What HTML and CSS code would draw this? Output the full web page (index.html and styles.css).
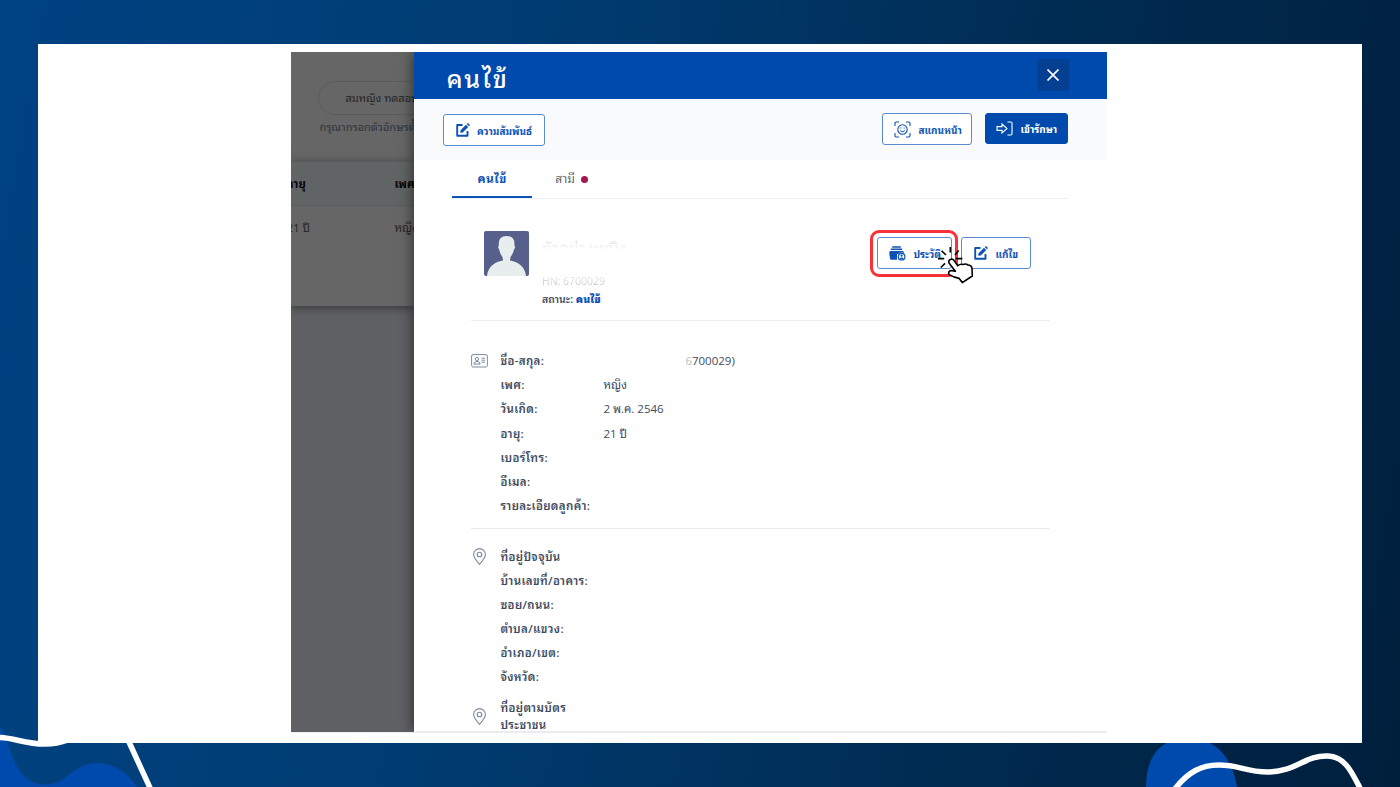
FILE: index.html
```html
<!DOCTYPE html>
<html lang="th">
<head>
    <meta charset="UTF-8">
    <meta name="viewport" content="width=device-width, initial-scale=1.0">
    <title>คนไข้</title>
    <link rel="stylesheet" href="styles.css">
</head>
<body>
    <div class="slide">
        <svg class="waves" viewBox="0 0 1400 787">
            <path class="blob" d="M0 727C9 738 10 760 22 774C33 787 52 788 66 777C80 766 88 763 98 763C114 763 128 773 137 787H0Z"/>
            <path class="blob" d="M1146 787C1146 762 1156 738 1188 738C1218 738 1233 761 1237 787Z"/>
        </svg>
        <div class="card">
            <div class="shot">
                <div class="behind">
                    <div class="search">
                        <div class="search-box">สมหญิง ทดสอบ</div>
                        <div class="hint">กรุณากรอกตัวอักษรตั้ง</div>
                    </div>
                    <div class="table">
                        <div class="table-row table-head"><span>อายุ</span><span>เพศ</span></div>
                        <div class="table-row"><span>21 ปี</span><span>หญิง</span></div>
                    </div>
                </div>
                <div class="drawer">
                    <div class="drawer-header">
                        <h1>คนไข้</h1>
                        <button class="close">
                            <svg width="12" height="12" viewBox="0 0 12 12"><path d="M.5 .5L11.5 11.5M11.5 .5L.5 11.5" stroke="#fff" stroke-width="1.7"/></svg>
                        </button>
                    </div>
                    <div class="toolbar">
                        <button class="btn btn-relation">
                            <svg width="14" height="14" viewBox="0 0 14 14"><use href="#edit"/></svg>
                            <span>ความสัมพันธ์</span>
                        </button>
                        <button class="btn btn-scan">
                            <svg width="17" height="17" viewBox="0 0 17 17" fill="none" stroke="#0d52b5" stroke-width="1.1">
                                <path d="M1 5V2.2Q1 1 2.2 1H5M12 1H14.8Q16 1 16 2.2V5M16 12V14.8Q16 16 14.8 16H12M5 16H2.2Q1 16 1 14.8V12"/>
                                <circle cx="8.5" cy="8.5" r="4.7"/>
                                <path d="M6.8 6.5V7.6M10.2 6.5V7.6M6.3 9.5Q8.5 12 10.7 9.5"/>
                            </svg>
                            <span>สแกนหน้า</span>
                        </button>
                        <button class="btn btn-primary">
                            <svg width="17" height="15" viewBox="0 0 17 15" fill="none" stroke="#fff" stroke-width="1.1">
                                <path d="M1 5.6H6V3L11 7.5L6 12V9.4H1ZM11.5 1H14.8Q16 1 16 2.2V12.8Q16 14 14.8 14H11.5"/>
                            </svg>
                            <span>เข้ารักษา</span>
                        </button>
                    </div>
                    <div class="tabs">
                        <div class="tab active">คนไข้</div>
                        <div class="tab">สามี <i class="dot"></i></div>
                    </div>
                    <div class="profile">
                        <svg class="avatar" width="45" height="45" viewBox="0 0 45 45">
                            <rect width="45" height="45" rx="2" fill="#56608a"/>
                            <path d="M3 45C4 36 10 31 19 29.5L18.5 26Q16 23 15 18C13.5 17 14.5 15.5 14.8 14Q14 5 22.5 5Q31 5 30.4 14C31 15.5 31.7 17 30.2 18Q29 23 26.5 26L26 29.5C35 31 41 36 42 45Z" fill="#e8eeee"/>
                        </svg>
                        <div class="person">
                            <div class="person-name"><span>ตัวอย่างหญิง</span></div>
                            <div class="hn"><span>HN: 6700029</span></div>
                            <div class="status">สถานะ: <b>คนไข้</b></div>
                        </div>
                        <div class="actions">
                            <div class="highlight">
                                <button class="btn btn-history">
                                    <svg width="17" height="15" viewBox="0 0 17 15">
                                        <path d="M3.2 .3H11.8V1.7H3.2ZM1.8 2.6H13.2V4H1.8Z" fill="#0d52b5"/>
                                        <path d="M1.6 4.9H13.4Q14.8 4.9 14.8 6.3V8H8V13.8H2.4Q1.2 13.8 1 12.6L.2 6.4Q.2 4.9 1.6 4.9Z" fill="#0d52b5"/>
                                        <circle cx="12.6" cy="10.7" r="4.3" fill="#fff"/>
                                        <circle cx="12.6" cy="10.7" r="3.3" fill="#fff" stroke="#0d52b5" stroke-width="1.2"/>
                                        <circle cx="12.6" cy="9.7" r="1.1" fill="#0d52b5"/>
                                        <path d="M10.4 12.6Q12.6 10.4 14.8 12.6Q12.6 14.4 10.4 12.6Z" fill="#0d52b5"/>
                                    </svg>
                                    <span>ประวัติ</span>
                                </button>
                            </div>
                            <button class="btn btn-edit">
                                <svg width="14" height="14" viewBox="0 0 14 14"><use href="#edit"/></svg>
                                <span>แก้ไข</span>
                            </button>
                            <svg class="cursor" width="38" height="38" viewBox="0 0 38 38">
                                <path d="M13 13.6Q15.5 12.2 17 14.4L20.8 19.8Q23 17.6 26 18.4Q29 17.5 31 19Q34.5 19 35 22.5L35.3 30L25.3 36.6L22.2 32.4Q17 31.5 12.2 28.6Q10.6 26.4 13.2 24.8Q16 24.4 18.4 25.2L12 17Q11.2 14.8 13 13.6Z" fill="#fff" stroke="#000" stroke-width="1.6" stroke-linejoin="round"/>
                                <path d="M13.3 1V6.6M4.6 4.8L9 9M21.7 4.6L18 9M1 12.6H7.2M18.6 12.6H25.4M3.8 21.5L8 17.4" stroke="#000" stroke-width="1.6"/>
                            </svg>
                        </div>
                    </div>
                    <div class="details">
                        <div class="section">
                            <svg class="section-icon" width="17" height="14" viewBox="0 0 17 14" fill="none" stroke="#7f8ba0">
                                <rect x=".6" y=".6" width="15.8" height="12.4" rx="1.5"/>
                                <circle cx="6" cy="5" r="1.6"/>
                                <path d="M3 10.5Q3 7.8 5 7.5H7Q9 7.8 9 10.5M2.8 10H9M10.5 4.2H14M10.5 6.2H14M10.5 8.2H14"/>
                            </svg>
                            <dl class="fields">
                                <dt>ชื่อ-สกุล:</dt><dd class="masked"><span>6</span>700029)</dd>
                                <dt>เพศ:</dt><dd>หญิง</dd>
                                <dt>วันเกิด:</dt><dd>2 พ.ค. 2546</dd>
                                <dt>อายุ:</dt><dd>21 ปี</dd>
                                <dt>เบอร์โทร:</dt><dd></dd>
                                <dt>อีเมล:</dt><dd></dd>
                                <dt>รายละเอียดลูกค้า:</dt><dd></dd>
                            </dl>
                        </div>
                        <div class="section">
                            <svg class="section-icon" width="17" height="17" viewBox="0 0 17 17"><use href="#pin"/></svg>
                            <dl class="fields">
                                <dt>ที่อยู่ปัจจุบัน</dt><dd></dd>
                                <dt>บ้านเลขที่/อาคาร:</dt><dd></dd>
                                <dt>ซอย/ถนน:</dt><dd></dd>
                                <dt>ตำบล/แขวง:</dt><dd></dd>
                                <dt>อำเภอ/เขต:</dt><dd></dd>
                                <dt>จังหวัด:</dt><dd></dd>
                            </dl>
                        </div>
                        <div class="section section-card">
                            <svg class="section-icon" width="17" height="17" viewBox="0 0 17 17"><use href="#pin"/></svg>
                            <div class="two-line">ที่อยู่ตามบัตร<br>ประชาชน</div>
                        </div>
                    </div>
                </div>
            </div>
        </div>
        <svg class="waves front" viewBox="0 0 1400 787">
            <path d="M0 737.5C16 738 24 744 45 744Q57 744 68 740M129 742L151 790" />
            <path d="M1174 790C1188 772 1201 765 1219 765C1240 765 1245 772 1268 772C1296 772 1305 755 1328 756C1346 757 1352 773 1361 790"/>
        </svg>
    </div>

    <svg class="defs">
        <symbol id="edit" viewBox="0 0 14 14">
            <path d="M6.5 2H1.2V12.8H11.5V8" fill="none" stroke="#0d52b5" stroke-width="1.9" stroke-linejoin="round"/>
            <path d="M4.2 9.8L4.6 7.2L10 1.8L12.2 4L6.8 9.4ZM10.7 1.1L11.6.3Q12 0 12.5.4L13.6 1.5Q14 2 13.7 2.4L12.9 3.3Z" fill="#0d52b5"/>
        </symbol>
        <symbol id="pin" viewBox="0 0 17 17">
            <path d="M8.5 16.3Q2.6 9.8 2.6 6.5A5.9 5.9 0 0 1 14.4 6.5Q14.4 9.8 8.5 16.3Z" fill="none" stroke="#7f8ba0" stroke-width="1.1"/>
            <circle cx="8.5" cy="6.5" r="2.3" fill="none" stroke="#7f8ba0" stroke-width="1.1"/>
        </symbol>
    </svg>
</body>
</html>
```

FILE: styles.css
```css
* {
    box-sizing: border-box;
}
body {
    margin: 0;
    font-family: "Open Sans", "Noto Sans Thai Looped", Loma, Waree, Garuda, "Noto Sans Thai", sans-serif;
    font-size: 11.5px;
    color: #414b5e;
}
h1, dl, dd {
    margin: 0;
}
.slide {
    position: relative;
    width: 1400px;
    height: 787px;
    padding: 43.5px 38px;
    overflow: hidden;
    background: linear-gradient(100deg, #004383 0%, #003c72 35%, #00294d 75%, #001f3d 100%);
}
.waves {
    position: absolute;
    left: 0;
    top: 0;
    width: 1400px;
    height: 787px;
}
.blob {
    fill: #004aad;
}
.front {
    fill: none;
    stroke: #fff;
    stroke-width: 5.5;
}
.card {
    position: relative;
    width: 1323.5px;
    height: 699.5px;
    padding: 8.5px 0 0 253.4px;
    background: #fff;
}
.shot {
    display: flex;
    width: 816px;
    height: 680.5px;
    overflow: hidden;
    border-bottom: 1px solid #e8edf4;
}
.behind {
    flex: 0 0 123px;
    overflow: hidden;
    white-space: nowrap;
    background: #5f6164;
    color: #252527;
}
.search {
    height: 109px;
    padding: 29px 0 0 27px;
    background: #666;
}
.search-box {
    width: 160px;
    height: 34px;
    padding-left: 26px;
    border: 1px solid #5a5b5d;
    border-radius: 17px;
    font-size: 11px;
    line-height: 32px;
}
.hint {
    margin-top: 3px;
    padding-left: 1px;
    font-size: 11px;
    line-height: 17px;
    color: #30353c;
}
.table {
    height: 145px;
    background: #666;
    box-shadow: 0 2px 8px #37383a;
}
.table-row {
    display: flex;
    height: 45px;
    line-height: 43px;
}
.table-row span {
    flex: 0 0 108px;
    margin-left: -5px;
}
.table-row span + span {
    margin-left: 0;
}
.table-head {
    border-top: 1px solid #5a5d5f;
    border-bottom: 1px solid #5a5d5f;
    background: #616464;
    color: #060606;
    font-weight: bold;
}
.drawer {
    position: relative;
    display: flex;
    flex-direction: column;
    flex: 1;
    background: #fff;
    box-shadow: 0 0 14px rgba(0, 0, 0, .6);
    clip-path: inset(0 0 0 -20px);
}
.drawer-header {
    display: flex;
    flex: 0 0 47px;
    justify-content: space-between;
    padding: 7px 38px 0 32px;
    background: #004aad;
}
h1 {
    color: #fff;
    font-size: 25px;
    font-weight: 500;
    line-height: 38px;
    letter-spacing: 1.8px;
}
.close {
    display: flex;
    align-items: center;
    justify-content: center;
    width: 32px;
    height: 32px;
    padding: 0;
    border: 0;
    border-radius: 2px;
    background: #043f91;
}
.toolbar {
    display: flex;
    flex: 0 0 61px;
    padding: 14px 39px 0 28.5px;
    background: #f8fafc;
}
.btn {
    display: flex;
    align-items: center;
    height: 32px;
    padding: 0 0 0 12px;
    border: 1px solid #5b8bd0;
    border-radius: 3px;
    background: #fff;
    color: #0d52b5;
    font-family: inherit;
    font-size: 10px;
    font-weight: bold;
    white-space: nowrap;
}
.btn svg {
    flex: none;
    margin-right: 7px;
}
.btn-relation {
    width: 102px;
    margin-top: 1px;
    margin-right: auto;
}
.btn-scan {
    width: 90px;
    padding-left: 11px;
}
.btn-primary {
    width: 83px;
    height: 31px;
    margin-left: 13px;
    padding-left: 10px;
    border-color: #004aad;
    background: #004aad;
    color: #fff;
}
.tabs {
    display: flex;
    flex: 0 0 39px;
    margin: 0 38px;
    border-bottom: 1px solid #eaf0f6;
    line-height: 40px;
}
.tab {
    display: flex;
    align-items: center;
    justify-content: center;
    width: 79.5px;
    height: 38px;
    font-size: 12px;
    color: #666;
}
.active {
    border-bottom: 2px solid #0d52b5;
    padding-top: 2px;
    color: #0d52b5;
    font-weight: bold;
    letter-spacing: .5px;
}
.dot {
    width: 7px;
    height: 7px;
    margin-left: 6px;
    border-radius: 50%;
    background: #a31850;
}
.profile {
    display: flex;
    flex: 0 0 122px;
    margin: 0 57px;
    padding: 32px 0 0 12.5px;
    border-bottom: 1px solid #e8eff7;
}
.avatar {
    flex: none;
}
.person {
    width: 150px;
    padding-left: 13px;
    font-size: 10.5px;
}
/* name and number are faded out for privacy */
.person-name {
    height: 40px;
    padding-top: 2px;
    font-size: 16px;
    line-height: 30px;
    white-space: nowrap;
}
.person-name span {
    color: transparent;
    background: linear-gradient(#e6e6e6 35%, #fff 58%);
    background-clip: text;
}
.hn {
    height: 18px;
    line-height: 20px;
}
.hn span {
    color: transparent;
    background: linear-gradient(#f0f0f0 10%, #b5b5b8);
    background-clip: text;
}
.status {
    line-height: 20px;
    font-weight: 600;
}
.status b {
    color: #0d52b5;
}
.actions {
    position: relative;
    display: flex;
    align-items: flex-start;
    margin-left: auto;
    margin-right: 19px;
}
.highlight {
    width: 88px;
    height: 47px;
    margin-top: -1px;
    padding: 4px;
    border: 3px solid #f83238;
    border-radius: 9px;
}
.btn-history {
    width: 75px;
    padding-left: 11px;
}
.btn-edit {
    width: 70px;
    margin-top: 6px;
    margin-left: 3px;
}
.cursor {
    position: absolute;
    left: 67px;
    top: 15px;
}
.details {
    margin: 0 57px;
}
.section {
    display: flex;
    padding-top: 28px;
    height: 207.5px;
    border-bottom: 1px solid #e5ebf2;
}
.section + .section {
    height: auto;
    padding-top: 16px;
    border: 0;
}
.section-icon {
    flex: none;
    margin-top: 5px;
}
.section + .section .section-icon {
    margin-top: 3px;
}
.fields {
    display: grid;
    grid-template-columns: 103px 300px;
    grid-auto-rows: 24.2px;
    margin-left: 12px;
    line-height: 24px;
    white-space: nowrap;
}
dt, .two-line {
    font-weight: 600;
    letter-spacing: .35px;
}
.masked {
    padding-left: 82px;
}
.masked span {
    color: #b9bdc4;
}
.section.section-card {
    align-items: center;
    padding-top: 9px;
}
.section.section-card .section-icon {
    margin-top: 0;
}
.two-line {
    margin-left: 12px;
    line-height: 17.5px;
}
.defs {
    display: none;
}
```
